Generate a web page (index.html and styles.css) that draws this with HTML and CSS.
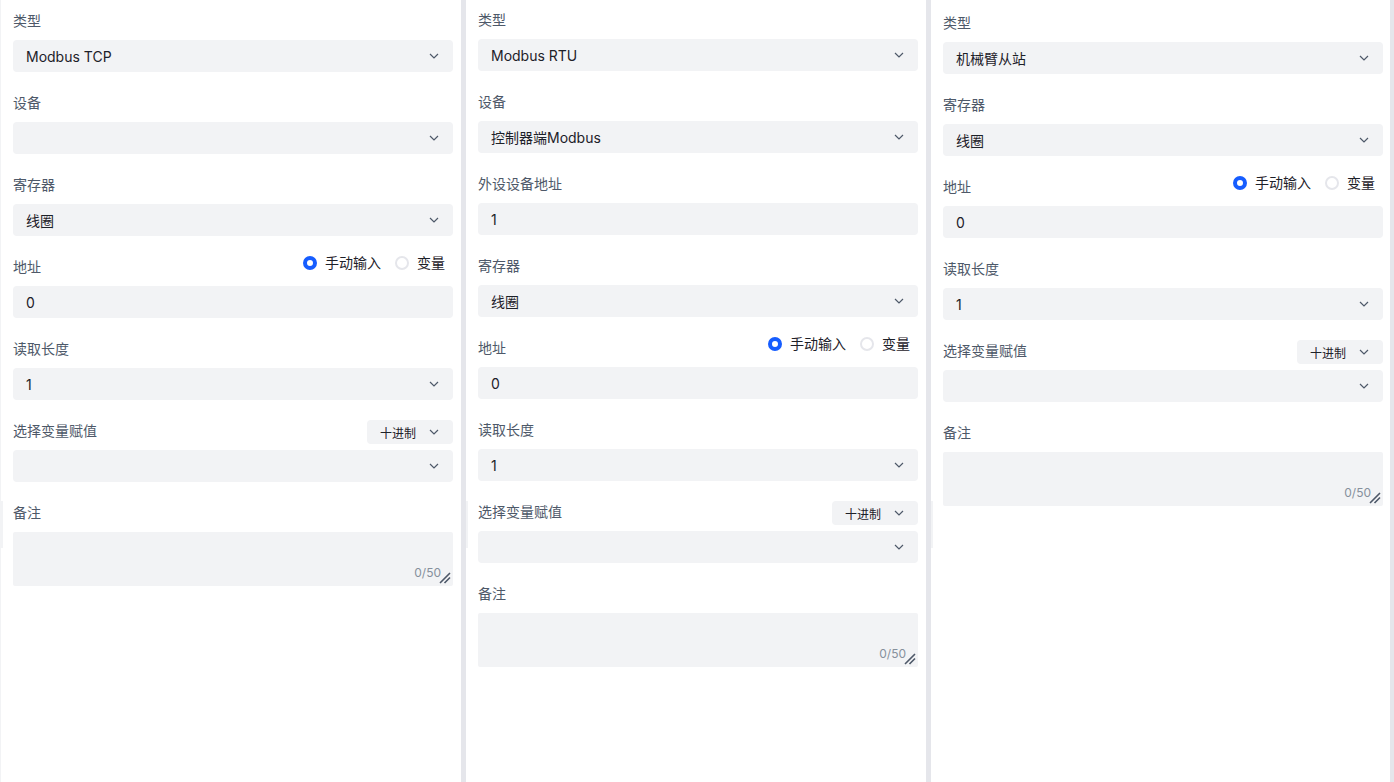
FILE: index.html
```html
<!DOCTYPE html>
<html lang="zh-CN">

<head>
  <meta charset="UTF-8">
  <meta name="viewport" content="width=device-width, initial-scale=1.0">
  <title>Modbus 配置</title>
  <link rel="stylesheet" href="styles.css">
</head>

<body>
  <div class="layout">

    <!-- Modbus TCP -->
    <section class="panel panel-first">
      <div class="handle"></div>
      <div class="field">
        <div class="field-head"><span class="label">类型</span></div>
        <div class="select"><span>Modbus TCP</span><svg class="arrow" viewBox="0 0 10 6"><path d="M1 1l4 4 4-4"/></svg></div>
      </div>
      <div class="field">
        <div class="field-head"><span class="label">设备</span></div>
        <div class="select"><span></span><svg class="arrow" viewBox="0 0 10 6"><path d="M1 1l4 4 4-4"/></svg></div>
      </div>
      <div class="field">
        <div class="field-head"><span class="label">寄存器</span></div>
        <div class="select"><span>线圈</span><svg class="arrow" viewBox="0 0 10 6"><path d="M1 1l4 4 4-4"/></svg></div>
      </div>
      <div class="field">
        <div class="field-head">
          <span class="label">地址</span>
          <div class="radio-group">
            <label class="radio"><span class="radio-dot checked"></span>手动输入</label>
            <label class="radio"><span class="radio-dot"></span>变量</label>
          </div>
        </div>
        <div class="input">0</div>
      </div>
      <div class="field">
        <div class="field-head"><span class="label">读取长度</span></div>
        <div class="select"><span>1</span><svg class="arrow" viewBox="0 0 10 6"><path d="M1 1l4 4 4-4"/></svg></div>
      </div>
      <div class="field">
        <div class="field-head">
          <span class="label">选择变量赋值</span>
          <div class="mini-select"><span>十进制</span><svg class="arrow" viewBox="0 0 10 6"><path d="M1 1l4 4 4-4"/></svg></div>
        </div>
        <div class="select"><span></span><svg class="arrow" viewBox="0 0 10 6"><path d="M1 1l4 4 4-4"/></svg></div>
      </div>
      <div class="field">
        <div class="field-head"><span class="label">备注</span></div>
        <div class="textarea">
          <span class="counter">0/50</span>
          <svg class="resize" viewBox="0 0 12 12"><path d="M1 11L11 1M5.5 11L11 5.5"/></svg>
        </div>
      </div>
    </section>

    <!-- Modbus RTU -->
    <section class="panel panel-second">
      <div class="handle"></div>
      <div class="field">
        <div class="field-head"><span class="label">类型</span></div>
        <div class="select"><span>Modbus RTU</span><svg class="arrow" viewBox="0 0 10 6"><path d="M1 1l4 4 4-4"/></svg></div>
      </div>
      <div class="field">
        <div class="field-head"><span class="label">设备</span></div>
        <div class="select"><span>控制器端Modbus</span><svg class="arrow" viewBox="0 0 10 6"><path d="M1 1l4 4 4-4"/></svg></div>
      </div>
      <div class="field">
        <div class="field-head"><span class="label">外设设备地址</span></div>
        <div class="input">1</div>
      </div>
      <div class="field">
        <div class="field-head"><span class="label">寄存器</span></div>
        <div class="select"><span>线圈</span><svg class="arrow" viewBox="0 0 10 6"><path d="M1 1l4 4 4-4"/></svg></div>
      </div>
      <div class="field">
        <div class="field-head">
          <span class="label">地址</span>
          <div class="radio-group">
            <label class="radio"><span class="radio-dot checked"></span>手动输入</label>
            <label class="radio"><span class="radio-dot"></span>变量</label>
          </div>
        </div>
        <div class="input">0</div>
      </div>
      <div class="field">
        <div class="field-head"><span class="label">读取长度</span></div>
        <div class="select"><span>1</span><svg class="arrow" viewBox="0 0 10 6"><path d="M1 1l4 4 4-4"/></svg></div>
      </div>
      <div class="field">
        <div class="field-head">
          <span class="label">选择变量赋值</span>
          <div class="mini-select"><span>十进制</span><svg class="arrow" viewBox="0 0 10 6"><path d="M1 1l4 4 4-4"/></svg></div>
        </div>
        <div class="select"><span></span><svg class="arrow" viewBox="0 0 10 6"><path d="M1 1l4 4 4-4"/></svg></div>
      </div>
      <div class="field">
        <div class="field-head"><span class="label">备注</span></div>
        <div class="textarea">
          <span class="counter">0/50</span>
          <svg class="resize" viewBox="0 0 12 12"><path d="M1 11L11 1M5.5 11L11 5.5"/></svg>
        </div>
      </div>
    </section>

    <!-- 机械臂从站 -->
    <section class="panel panel-third">
      <div class="handle"></div>
      <div class="field">
        <div class="field-head"><span class="label">类型</span></div>
        <div class="select"><span>机械臂从站</span><svg class="arrow" viewBox="0 0 10 6"><path d="M1 1l4 4 4-4"/></svg></div>
      </div>
      <div class="field">
        <div class="field-head"><span class="label">寄存器</span></div>
        <div class="select"><span>线圈</span><svg class="arrow" viewBox="0 0 10 6"><path d="M1 1l4 4 4-4"/></svg></div>
      </div>
      <div class="field">
        <div class="field-head">
          <span class="label">地址</span>
          <div class="radio-group">
            <label class="radio"><span class="radio-dot checked"></span>手动输入</label>
            <label class="radio"><span class="radio-dot"></span>变量</label>
          </div>
        </div>
        <div class="input">0</div>
      </div>
      <div class="field">
        <div class="field-head"><span class="label">读取长度</span></div>
        <div class="select"><span>1</span><svg class="arrow" viewBox="0 0 10 6"><path d="M1 1l4 4 4-4"/></svg></div>
      </div>
      <div class="field">
        <div class="field-head">
          <span class="label">选择变量赋值</span>
          <div class="mini-select"><span>十进制</span><svg class="arrow" viewBox="0 0 10 6"><path d="M1 1l4 4 4-4"/></svg></div>
        </div>
        <div class="select"><span></span><svg class="arrow" viewBox="0 0 10 6"><path d="M1 1l4 4 4-4"/></svg></div>
      </div>
      <div class="field">
        <div class="field-head"><span class="label">备注</span></div>
        <div class="textarea">
          <span class="counter">0/50</span>
          <svg class="resize" viewBox="0 0 12 12"><path d="M1 11L11 1M5.5 11L11 5.5"/></svg>
        </div>
      </div>
    </section>

  </div>
</body>

</html>
```

FILE: styles.css
```css
body {
  margin: 0;
  background-color: #e5e6eb;
  font-family: Inter, "Noto Sans CJK SC", sans-serif;
  font-size: 14px;
  color: #1d2129;
}

.layout {
  display: flex;
  gap: 5px;
  height: 100vh;
}

.panel {
  position: relative;
  box-sizing: border-box;
  background-color: #fff;
}

.panel-first {
  width: 461px;
  padding: 10px 8px 0 12px;
  border-left: 1px solid #f2f3f5;
}

.panel-second {
  width: 460px;
  padding: 9px 8px 0 12px;
}

.panel-third {
  width: 459px;
  padding: 12px 7px 0 12px;
}

/* little splitter grip on the left edge */
.handle {
  position: absolute;
  left: 0;
  top: 501px;
  width: 2px;
  height: 47px;
  background-color: #f2f3f5;
}

.field {
  width: 440px;
  margin-bottom: 20px;
}

.field-head {
  display: flex;
  justify-content: space-between;
  align-items: flex-start;
  height: 22px;
  margin-bottom: 8px;
}

.label {
  line-height: 22px;
  color: #4e5969;
}

.select,
.input {
  display: flex;
  align-items: center;
  justify-content: space-between;
  box-sizing: border-box;
  height: 32px;
  padding: 0 14px 0 13px;
  border-radius: 4px;
  background-color: #f2f3f5;
  color: #1d2129;
}

.arrow {
  width: 10px;
  height: 6px;
  fill: none;
  stroke: #4e5969;
  stroke-width: 1.2;
}

.mini-select {
  display: flex;
  align-items: center;
  justify-content: space-between;
  box-sizing: border-box;
  width: 86px;
  height: 24px;
  padding: 0 14px 0 13px;
  border-radius: 4px;
  background-color: #f2f3f5;
  font-size: 12px;
  color: #1d2129;
}

.radio-group {
  display: flex;
  align-items: center;
  gap: 14px;
  margin-right: 8px;
  line-height: 14px;
}

.radio {
  display: flex;
  align-items: center;
  gap: 8px;
  color: #1d2129;
}

.radio-dot {
  box-sizing: border-box;
  width: 14px;
  height: 14px;
  border: 2px solid #e5e6eb;
  border-radius: 50%;
  background-color: #fff;
}

.radio-dot.checked {
  border: 4px solid #165dff;
}

.textarea {
  position: relative;
  height: 54px;
  border-radius: 2px;
  background-color: #f2f3f5;
}

.counter {
  position: absolute;
  right: 12px;
  bottom: 5px;
  font-size: 12px;
  line-height: 16px;
  color: #86909c;
}

.resize {
  position: absolute;
  right: 2px;
  bottom: 2px;
  width: 12px;
  height: 12px;
  fill: none;
  stroke: #4e5969;
  stroke-width: 1.6;
}
```
